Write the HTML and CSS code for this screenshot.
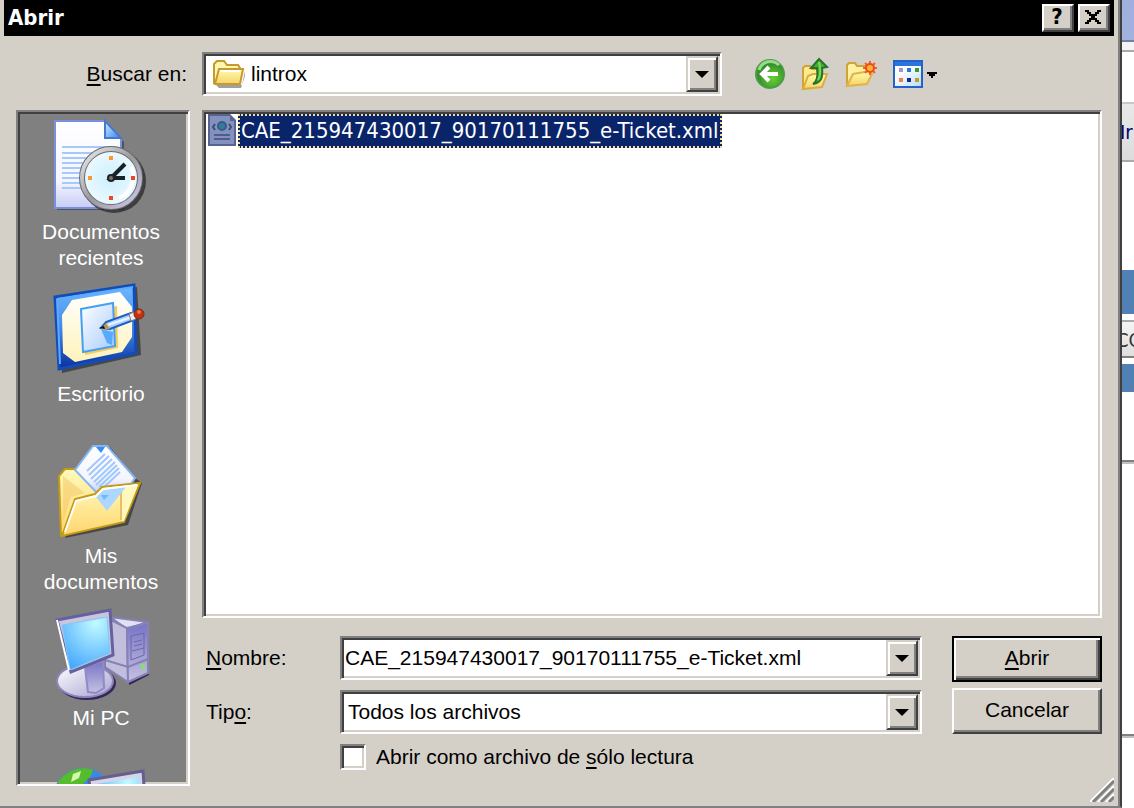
FILE: index.html
```
<!DOCTYPE html>
<html lang="es">
<head>
    <meta charset="UTF-8">
    <meta name="viewport" content="width=device-width, initial-scale=1.0">
    <title>Abrir</title>
    <link rel="stylesheet" href="styles.css">
</head>
<body>
    <main class="dialog">
        <!-- Barra de título -->
        <header class="titlebar">
            <h1 class="title">Abrir</h1>
            <button class="caption-button" type="button" aria-label="Ayuda">?</button>
            <button class="caption-button" type="button" aria-label="Cerrar">
                <svg width="16" height="14" viewBox="0 0 16 14" shape-rendering="crispEdges"><path d="M0 0h4v2H0zM12 0h4v2h-4zM2 2h4v2H2zM10 2h4v2h-4zM4 4h8v2H4zM6 6h4v2H6zM4 8h8v2H4zM2 10h4v2H2zM10 10h4v2h-4zM0 12h4v2H0zM12 12h4v2h-4z"/></svg>
            </button>
        </header>

        <!-- Carpeta actual y herramientas -->
        <div class="look-in">
            <label class="look-in-label" for="folder"><u>B</u>uscar en:</label>
            <div class="combo look-in-combo">
                <svg class="folder-icon" width="34" height="30" viewBox="0 0 34 30">
                    <defs><linearGradient id="yellow" x2="0" y2="1"><stop offset="0" stop-color="#fffcae"/><stop offset="1" stop-color="#f6d365"/></linearGradient></defs>
                    <path d="M4 26h26l3-14v5l-4 12H7z" fill="#777" opacity=".7"/>
                    <path d="M2 24V5l3-3h7l3 4h11l2 3v15z" fill="#fff6b0" stroke="#c69a2d" stroke-width="2"/>
                    <path d="M3 25l4-15h24l-3 15z" fill="url(#yellow)" stroke="#c69a2d" stroke-width="2"/>
                    <path d="M8 12h20" stroke="#fff" stroke-width="2"/>
                </svg>
                <select class="combo-field" id="folder"><option>lintrox</option></select>
                <button class="combo-arrow" type="button" aria-label="Ver carpetas"></button>
            </div>
            <div class="toolbar">
                <button class="tool" type="button" aria-label="Atrás">
                    <svg width="32" height="32" viewBox="0 0 32 32">
                        <defs><radialGradient id="green" cx=".6" cy=".65"><stop offset="0" stop-color="#67cf35"/><stop offset=".6" stop-color="#4cad2f"/><stop offset="1" stop-color="#388e2d"/></radialGradient></defs>
                        <circle cx="16" cy="16" r="14" fill="url(#green)" stroke="#4b9d45" stroke-width="2"/>
                        <path d="M5 12a12 12 0 0 1 20-5" fill="none" stroke="#98d98e" stroke-width="3"/>
                        <path d="M24 16H9M15 9l-7 7 7 7" fill="none" stroke="#fff" stroke-width="4"/>
                    </svg>
                </button>
                <button class="tool" type="button" aria-label="Subir un nivel">
                    <svg width="32" height="34" viewBox="0 0 32 34">
                        <path d="M3 32V11l2-2h5l2 3h10v8" fill="#ffe98f" stroke="#d0a338" stroke-width="2"/>
                        <path d="M3 32l5-13 5-2h14l-5 13z" fill="url(#yellow)" stroke="#d9ad3f" stroke-width="2"/>
                        <path d="M13 27c5-3 5-9 4-16h-6l8-9 8 8-5 1c1 8 0 15-9 16z" fill="#49ad35" stroke="#26742a" stroke-width="2"/>
                        <path d="M19 5c2 8 2 13-1 18" fill="none" stroke="#7ad957" stroke-width="2"/>
                    </svg>
                </button>
                <button class="tool" type="button" aria-label="Crear nueva carpeta">
                    <svg width="34" height="30" viewBox="0 0 34 30">
                        <path d="M2 27V6l2-2h6l2 3h12v10" fill="#fff0a2" stroke="#d0a338" stroke-width="2"/>
                        <path d="M2 27l6-12 17-3 2 3-5 10z" fill="url(#yellow)" stroke="#dfb54b" stroke-width="2"/>
                        <path d="M25 2v14M18 9h14M20 4l10 10M30 4L20 14" stroke="#ef6038" stroke-width="2"/>
                        <circle cx="25" cy="9" r="4" fill="#ffb52f" stroke="#f04a17" stroke-width="2"/>
                    </svg>
                </button>
                <button class="tool tool-views" type="button" aria-label="Menú Ver">
                    <svg width="44" height="28" viewBox="0 0 44 28" shape-rendering="crispEdges">
                        <defs><linearGradient id="pane" x2="1" y2="1"><stop offset=".3" stop-color="#fff"/><stop offset="1" stop-color="#b9dcfb"/></linearGradient></defs>
                        <path d="M0 0h30v28H0z" fill="#2363c9"/><path d="M2 2h26v4H2z" fill="#2b73df"/><path d="M2 6h26v20H2z" fill="url(#pane)"/>
                        <path d="M6 8h4v4H6z" fill="#9b98cd"/><path d="M14 8h4v4h-4z" fill="#2878e4"/><path d="M22 8h4v4h-4z" fill="#3c9c23"/>
                        <path d="M6 18h4v4H6z" fill="#ee7d50"/><path d="M14 18h4v4h-4z" fill="#0c2e98"/><path d="M22 18h4v4h-4z" fill="#c39c28"/>
                        <path d="M34 12h10v2h-2v2h-2v2h-2v-2h-2v-2h-2z"/>
                    </svg>
                </button>
            </div>
        </div>

        <div class="content">
            <!-- Barra de lugares -->
            <nav class="places">
                <a class="place" href="#recientes">
                    <svg class="place-icon" viewBox="0 0 96 96">
                        <defs>
                            <linearGradient id="sheet" x2="0" y2="1"><stop offset="0" stop-color="#fff"/><stop offset=".7" stop-color="#f4f5ff"/><stop offset="1" stop-color="#c8ccf4"/></linearGradient>
                            <linearGradient id="fold" x2="1" y2="1"><stop offset="0" stop-color="#d6efff"/><stop offset="1" stop-color="#3185ec"/></linearGradient>
                            <linearGradient id="rim" x2="1" y2="1"><stop offset="0" stop-color="#eee"/><stop offset=".5" stop-color="#999"/><stop offset="1" stop-color="#d0cbed"/></linearGradient>
                            <radialGradient id="face"><stop offset="0" stop-color="#cbefff"/><stop offset="1" stop-color="#eefaff"/></radialGradient>
                        </defs>
                        <path d="M5 6h49l17 18v68H4z" fill="#333" opacity=".6"/>
                        <path d="M2 3h50l16 17v70H2z" fill="url(#sheet)" stroke="#7790df" stroke-width="2"/>
                        <path d="M52 3v17h16z" fill="url(#fold)" stroke="#4777cf" stroke-width="2"/>
                        <path d="M9 29h54M9 35h50M9 40h50M9 45h50M9 50h50M9 55h50M9 60h50M9 65h50M9 70h50" stroke="#a6c9fb" stroke-width="2"/>
                        <circle cx="61" cy="63" r="32" fill="#222" opacity=".7"/>
                        <circle cx="58" cy="60" r="29" fill="url(#face)" stroke="#686878" stroke-width="6"/>
                        <circle cx="58" cy="60" r="29" fill="none" stroke="url(#rim)" stroke-width="4"/>
                        <path d="M78 49a23 23 0 0 1-12 31" fill="none" stroke="#fff" stroke-width="4"/>
                        <path d="M56 38h4v4h-4zM35 58h4v4h-4z" fill="#f59b32"/><path d="M78 58h4v4h-4zM56 78h4v4h-4z" fill="#eb4920"/>
                        <path d="M72 46L58 60h14" fill="none" stroke="#17232b" stroke-width="4"/>
                        <circle cx="58" cy="60" r="3" fill="#777" stroke="#222" stroke-width="2"/>
                    </svg>
                    <span class="place-name">Documentos recientes</span>
                </a>
                <a class="place" href="#escritorio">
                    <svg class="place-icon" viewBox="0 0 96 96">
                        <defs>
                            <linearGradient id="desk" x2="0" y2="1"><stop offset="0" stop-color="#6fb8ff"/><stop offset=".5" stop-color="#438be9"/><stop offset="1" stop-color="#082f9e"/></linearGradient>
                            <linearGradient id="cream" x2="0" y2="1"><stop offset="0" stop-color="#fff"/><stop offset="1" stop-color="#fff3ba"/></linearGradient>
                            <linearGradient id="paper" x2="1" y2="1"><stop offset="0" stop-color="#fff"/><stop offset="1" stop-color="#a7cbff"/></linearGradient>
                        </defs>
                        <path d="M6 20L84 7l4 68L9 93z" fill="#222" opacity=".6"/>
                        <path d="M2 17L81 5l2 68L6 89z" fill="url(#desk)" stroke="#124cb9" stroke-width="3"/>
                        <path d="M4 19L80 7M4 19l3 65" stroke="#5dacff" stroke-width="2"/>
                        <path d="M19 20l48-8 12 15v30L69 72 22 82 10 73 9 35z" fill="url(#cream)"/>
                        <path d="M31 32l33-6 1 42-33 7z" fill="#f4ca63"/>
                        <path d="M28 29l32-6 2 43-32 6z" fill="url(#paper)" stroke="#45a0f5" stroke-width="2"/>
                        <path d="M48 49l12 3-1 13-5-2z" fill="#58aafc"/>
                        <path d="M48 48l5-6 25-9 3 7-24 9z" fill="#a9d1ff" stroke="#205bc1" stroke-width="2"/>
                        <path d="M55 45l24-8" stroke="#e8f6ff" stroke-width="2"/>
                        <path d="M48 49l5-6 4 6z" fill="#c99737"/><path d="M46 48l5-2 1 3z" fill="#111"/>
                        <path d="M76 34l5-2 2 7-5 2z" fill="#eee" stroke="#777"/>
                        <circle cx="86" cy="34" r="5" fill="#c5310e" stroke="#713021"/><circle cx="86" cy="32" r="2" fill="#f57638"/>
                    </svg>
                    <span class="place-name">Escritorio</span>
                </a>
                <a class="place" href="#documentos">
                    <svg class="place-icon" viewBox="0 0 96 96">
                        <defs><linearGradient id="gold" x2="0" y2="1"><stop offset="0" stop-color="#fffabb"/><stop offset="1" stop-color="#ffd56c"/></linearGradient></defs>
                        <path d="M12 96l63-13 14-42-7-5L57 5z" fill="#222" opacity=".6"/>
                        <path d="M8 93L6 34l6-7h10l27 26z" fill="url(#gold)" stroke="#c49b16" stroke-width="2"/>
                        <path d="M10 34v46l8-25 14-4z" fill="#f3c564" opacity=".5"/>
                        <path d="M40 4h14l28 32-8 12-30 3-22-23z" fill="url(#sheet)" stroke="#85b5f4" stroke-width="2"/>
                        <path d="M43 5h9l-4 6z" fill="#338ff3"/>
                        <path d="M34 29l18-17M36 33l20-19M38 37l21-20M41 40l21-20M43 43l21-20M46 45l20-19M49 47l18-17" stroke="#9fc8fc" stroke-width="2"/>
                        <path d="M9 94l13-37 20-5 7-7 38-4-16 39z" fill="url(#gold)" stroke="#c49b16" stroke-width="2"/>
                        <path d="M68 79V46l17-3-14 36z" fill="#fff7bb"/><path d="M68 78V46" stroke="#eebd63" stroke-width="2"/>
                        <path d="M43 55l7-7 23-3-19 24z" fill="#acd7ff"/><path d="M48 53h8l-5 5z" fill="#72b8fa"/>
                        <path d="M12 90l11-31 20-5 7-7 34-4" fill="none" stroke="#fff" stroke-width="2"/>
                    </svg>
                    <span class="place-name">Mis documentos</span>
                </a>
                <a class="place" href="#mipc">
                    <svg class="place-icon" viewBox="0 0 96 96">
                        <defs>
                            <linearGradient id="metal" x2="1" y2="1"><stop offset="0" stop-color="#fff"/><stop offset="1" stop-color="#a7a3d2"/></linearGradient>
                            <linearGradient id="tower" x2="0" y2="1"><stop offset="0" stop-color="#7774c5"/><stop offset="1" stop-color="#c5c1e1"/></linearGradient>
                            <radialGradient id="screen" cx=".7" cy=".1" r="1"><stop offset="0" stop-color="#c3fbff"/><stop offset="1" stop-color="#41a5ff"/></radialGradient>
                        </defs>
                        <path d="M76 80l20-10V20" fill="none" stroke="#332750" stroke-width="2"/>
                        <path d="M57 13l38 5-21 7z" fill="#e3e1ef" stroke="#8481ba" stroke-width="2"/>
                        <path d="M52 13l22 11 1 54-23-15z" fill="#c2bfdd" stroke="#8580b6" stroke-width="2"/>
                        <path d="M74 24l21-5v50l-20 9z" fill="url(#tower)" stroke="#8581ba" stroke-width="2"/>
                        <path d="M78 32l13-3v22l-13 5zM81 38l8-2M81 42l8-2M79 47l12-3" fill="none" stroke="#6b67ae" stroke-width="1"/>
                        <path d="M52 56l23 7 20-8" fill="none" stroke="#8580b6" stroke-width="2"/><path d="M88 60h4v5h-4z" fill="#83e45c"/>
                        <ellipse cx="34" cy="79" rx="29" ry="17" fill="#372759"/>
                        <ellipse cx="32" cy="77" rx="28" ry="16" fill="url(#metal)" stroke="#8e87bb" stroke-width="2"/>
                        <path d="M32 63l18-6 1 27-8 5-8-1z" fill="url(#tower)" stroke="#8e89c7" stroke-width="2"/>
                        <path d="M4 16L57 6l3 45-42 17z" fill="#c9c5df" stroke="#65619e" stroke-width="3"/>
                        <path d="M9 21l45-8 3 36-40 17z" fill="url(#screen)" stroke="#85c6f2"/>
                        <path d="M4 16l12 50" stroke="#fff" stroke-width="2"/>
                    </svg>
                    <span class="place-name">Mi PC</span>
                </a>
                <a class="place" href="#red" aria-label="Mis sitios de red">
                    <svg class="place-icon" viewBox="0 0 96 96">
                        <circle cx="30" cy="32" r="30" fill="#3589e9"/>
                        <path d="M5 16C14 3 30 0 40 4l-2 6-8 8H5z" fill="#55bd2c"/><path d="M20 8l8-3-2 7-8 4z" fill="#d4f9ac"/>
                        <path d="M36 14L90 5l4 60-50 10z" fill="#d7d4e6" stroke="#655e91" stroke-width="3"/>
                        <path d="M44 18l42-7 2 50-40 8z" fill="url(#screen)"/>
                    </svg>
                </a>
            </nav>

            <div class="browser">
                <!-- Lista de archivos -->
                <ul class="file-list">
                    <li class="file">
                        <svg width="28" height="32" viewBox="0 0 28 32">
                            <path d="M0 0h22l6 6v26H0z" fill="#56648f"/><path d="M2 2h20v5h4v23H2z" fill="#8491bd"/>
                            <path d="M7 10l-2 3 2 3M21 10l2 3-2 3" fill="none" stroke="#3f4c78" stroke-width="2"/>
                            <circle cx="14" cy="12" r="4" fill="#347d91" stroke="#365a91" stroke-width="2"/>
                            <path d="M6 21h16M6 25h16" stroke="#4e5d91" stroke-width="2"/>
                        </svg>
                        <a class="file-name" href="#archivo">CAE_215947430017_90170111755_e-Ticket.xml</a>
                    </li>
                </ul>

                <!-- Nombre, tipo y botones -->
                <form class="form">
                    <div class="fields">
                        <div class="field">
                            <label class="field-label" for="name"><u>N</u>ombre:</label>
                            <div class="combo">
                                <input class="combo-field" id="name" type="text" value="CAE_215947430017_90170111755_e-Ticket.xml">
                                <button class="combo-arrow" type="button" aria-label="Ver nombres"></button>
                            </div>
                        </div>
                        <div class="field">
                            <label class="field-label" for="type">Tip<u>o</u>:</label>
                            <div class="combo">
                                <select class="combo-field type-field" id="type"><option>Todos los archivos</option></select>
                                <button class="combo-arrow" type="button" aria-label="Ver tipos"></button>
                            </div>
                        </div>
                        <div class="readonly">
                            <input class="checkbox" id="readonly" type="checkbox">
                            <label for="readonly">Abrir como archivo de <u>s</u>ólo lectura</label>
                        </div>
                    </div>
                    <div class="actions">
                        <button class="button button-default" type="button"><u>A</u>brir</button>
                        <button class="button" type="button">Cancelar</button>
                    </div>
                </form>
            </div>
        </div>
        <svg class="grip" width="24" height="24" viewBox="0 0 24 24">
            <path d="M0 24L24 0M8 24L24 8M16 24l8-8" stroke="#fff" stroke-width="2"/>
            <path d="M3 24L24 3M11 24l13-13M19 24l5-5" stroke="#808080" stroke-width="3"/>
        </svg>
    </main>

    <!-- Ventana que queda detrás del diálogo -->
    <aside class="behind">
        <div class="behind-title"></div>
        <div class="behind-address"></div>
        <div class="behind-menu">Ir</div>
        <div class="behind-band"></div>
        <div class="behind-heading">CO</div>
        <div class="behind-row"></div>
        <div class="behind-panel"></div>
        <div class="behind-footer"></div>
    </aside>
</body>
</html>
```
FILE: styles.css
```
* {
    box-sizing: border-box;
}
body {
    display: flex;
    height: 100vh;
    margin: 0;
    overflow: hidden;
    background: #fff;
    color: #000;
    font: 21px/26px "Liberation Sans", Arial, sans-serif;
}
button, input, select {
    margin: 0;
    padding: 0;
    border: 0;
    border-radius: 0;
    color: inherit;
    font: inherit;
}
svg {
    display: block;
    flex: none;
}
a {
    color: inherit;
    text-decoration: none;
}
u {
    text-decoration-thickness: 2px;
    text-underline-offset: 3px;
    text-decoration-skip-ink: none;
}

/* Marco del diálogo */
.dialog {
    position: relative;
    display: flex;
    flex: 1;
    flex-direction: column;
    min-width: 0;
    background: #d4d0c8;
    border-right: 2px solid #404040;
    border-bottom: 2px solid #808080;
    box-shadow: inset -2px 0 #808080;
    padding-right: 2px;
}
.titlebar {
    display: flex;
    align-items: center;
    gap: 4px;
    height: 36px;
    margin: 0 4px;
    padding: 0 4px;
    background: #000;
    color: #fff;
}
.title {
    flex: 1;
    margin: 0;
    font: bold 22px/26px "DejaVu Sans Condensed", Tahoma, sans-serif;
}
.caption-button {
    display: flex;
    align-items: center;
    justify-content: center;
    width: 32px;
    height: 28px;
    padding: 0 2px 2px 0;
    background: #d4d0c8;
    border: 2px solid;
    border-color: #fff #404040 #404040 #fff;
    box-shadow: inset -2px -2px #808080;
    color: #000;
    font: bold 22px/24px "DejaVu Sans Condensed", Tahoma, sans-serif;
}

/* Fila superior */
.look-in {
    display: flex;
    align-items: center;
    padding: 16px 16px 14px;
}
.look-in-label {
    width: 186px;
    padding-right: 15px;
    text-align: right;
}
.look-in-combo {
    max-width: 520px;
}
.folder-icon {
    margin: 0 4px 0 6px;
}
.toolbar {
    display: flex;
    align-items: center;
    gap: 14px;
    margin-left: 32px;
}
.tool {
    display: flex;
    align-items: center;
    justify-content: center;
    width: 32px;
    height: 34px;
    background: none;
}
.tool-views {
    width: 46px;
}

/* Cuadros combinados */
.combo {
    display: flex;
    flex: 1;
    align-items: center;
    height: 44px;
    min-width: 0;
    padding: 2px;
    background: #fff;
    border: 2px solid;
    border-color: #808080 #fff #fff #808080;
    box-shadow: inset 2px 2px #404040, inset -2px -2px #d4d0c8;
}
.combo-field {
    appearance: none;
    flex: 1;
    min-width: 0;
    height: 26px;
    padding-left: 1px;
    background: none;
    outline: none;
}
.type-field {
    padding-left: 4px;
}
.combo-arrow {
    display: flex;
    align-items: center;
    justify-content: center;
    align-self: stretch;
    width: 32px;
    background: #d4d0c8;
    border: 2px solid;
    border-color: #d4d0c8 #404040 #404040 #d4d0c8;
    box-shadow: inset 2px 2px #fff, inset -2px -2px #808080;
}
.combo-arrow::before {
    content: "";
    border: 7px solid transparent;
    border-top-color: #000;
    border-bottom: 0;
}

/* Zona central */
.content {
    display: flex;
    flex: 1;
    gap: 12px;
    min-height: 0;
    padding: 0 16px 20px;
}
.places {
    width: 174px;
    padding: 6px 6px 0 2px;
    overflow: hidden;
    background: #808080;
    border: 2px solid;
    border-color: #808080 #fff #fff #808080;
    box-shadow: inset 2px 2px #404040, inset -2px -2px #d4d0c8;
    color: #fff;
    text-align: center;
}
.place {
    display: flex;
    flex-direction: column;
    align-items: center;
    gap: 5px;
    height: 162px;
}
.place-icon {
    width: 96px;
    height: 96px;
}
.place-name {
    width: 130px;
}
.browser {
    display: flex;
    flex: 1;
    flex-direction: column;
    min-width: 0;
}
.file-list {
    flex: 1;
    margin: 0;
    padding: 2px;
    list-style: none;
    background: #fff;
    border: 2px solid;
    border-color: #808080 #fff #fff #808080;
    box-shadow: inset 2px 2px #404040, inset -2px -2px #d4d0c8;
}
.file {
    display: flex;
    gap: 2px;
    padding-left: 2px;
}
.file-name {
    padding: 2px 1px;
    background: #0a246a;
    border: 2px dotted #f5db95;
    color: #fff;
    font: 22px/26px "DejaVu Sans Condensed", Tahoma, sans-serif;
}

/* Formulario inferior */
.form {
    display: flex;
    gap: 30px;
    padding: 18px 0 16px;
}
.fields {
    display: flex;
    flex: 1;
    flex-direction: column;
    gap: 10px;
    min-width: 0;
}
.field {
    display: flex;
    align-items: center;
}
.field-label {
    width: 138px;
    padding-left: 4px;
}
.readonly {
    display: flex;
    align-items: center;
    gap: 10px;
    padding-left: 138px;
}
.checkbox {
    appearance: none;
    width: 26px;
    height: 26px;
    background: #fff;
    border: 2px solid;
    border-color: #808080 #fff #fff #808080;
    box-shadow: inset 2px 2px #404040, inset -2px -2px #d4d0c8;
}
.actions {
    display: flex;
    flex-direction: column;
    gap: 6px;
    width: 150px;
}
.button {
    height: 46px;
    padding-bottom: 2px;
    background: #d4d0c8;
    border: 2px solid;
    border-color: #fff #404040 #404040 #fff;
    box-shadow: inset -2px -2px #808080;
}
.button-default {
    border-color: #000;
    box-shadow: inset 2px 2px #fff, inset -2px -2px #404040, inset -4px -4px #808080;
}
.grip {
    position: absolute;
    right: 6px;
    bottom: 4px;
}

/* Ventana de fondo */
.behind {
    width: 12px;
    overflow: hidden;
    font: 20px/24px "DejaVu Sans Condensed", Tahoma, sans-serif;
}
.behind-title {
    height: 42px;
    background: linear-gradient(#9fb0dc, #a2b2df);
    border-bottom: 2px solid #7080a8;
}
.behind-address {
    height: 60px;
    border-top: 8px solid #f4f4f4;
    box-shadow: inset 0 2px #aaa;
}
.behind-menu {
    height: 60px;
    padding-top: 16px;
    background: linear-gradient(#e8e8e8, #dcdcdc);
    border-top: 2px solid #c8c8c8;
    border-bottom: 2px solid #aaa;
    color: #00006c;
    text-indent: -2px;
}
.behind-band {
    height: 44px;
    margin: 108px 0 6px;
    background: #5080b4;
}
.behind-heading {
    height: 38px;
    padding-top: 6px;
    background: linear-gradient(#f4f4f4, #dedede);
    border-top: 2px solid #aaa;
    border-bottom: 2px solid #808080;
    color: #333;
    text-indent: -6px;
}
.behind-row {
    height: 28px;
    margin-top: 6px;
    background: #5080b4;
}
.behind-panel {
    height: 72px;
    border-bottom: 2px solid #c0c0c0;
    box-shadow: inset 0 -2px #808080;
}
.behind-footer {
    height: 274px;
    border-bottom: 2px solid #c0c0c0;
    box-shadow: inset 0 -2px #808080;
}
```
